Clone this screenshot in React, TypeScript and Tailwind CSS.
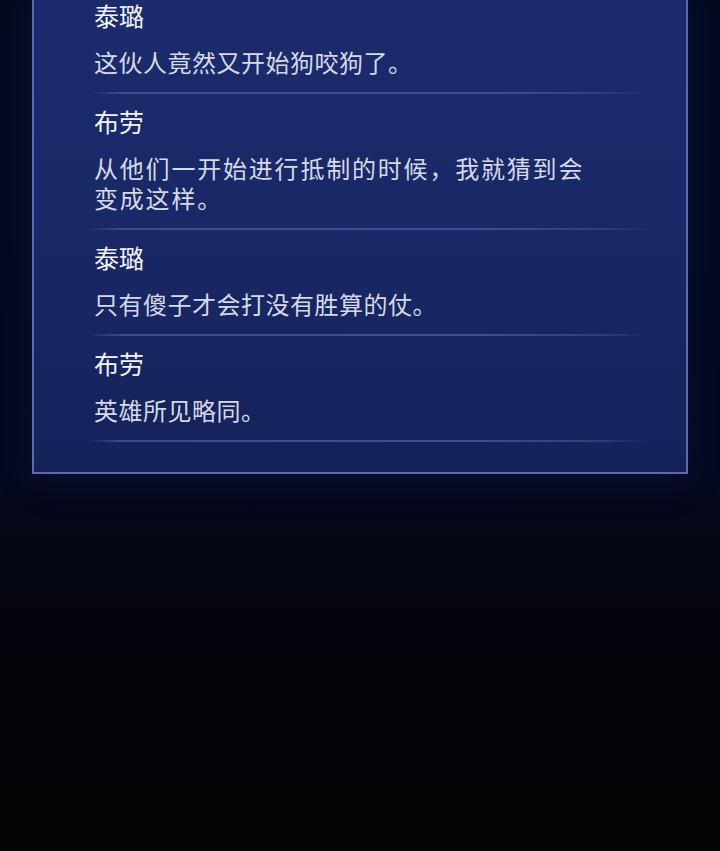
const lines = [
  { name: "泰璐", text: "这伙人竟然又开始狗咬狗了。", wide: false },
  { name: "布劳", text: "从他们一开始进行抵制的时候，我就猜到会变成这样。", wide: true },
  { name: "泰璐", text: "只有傻子才会打没有胜算的仗。", wide: false },
  { name: "布劳", text: "英雄所见略同。", wide: false },
];

const font = { fontFamily: '"Noto Sans CJK SC", "Noto Sans", sans-serif' };

export default function App() {
  return (
    <div
      className="h-[851px] w-[720px] overflow-hidden bg-[linear-gradient(180deg,#050a20_0%,#050920_55%,#03040c_72%,#050506_100%)]"
      style={font}
    >
      {/* dialogue log panel, scrolled so its top edge sits above the view */}
      <div className="mx-8 -mt-[14px] border-2 border-[#5f69b2] bg-[linear-gradient(180deg,#1b2b6d_0%,#192866_50%,#15225a_100%)] pb-[30px] shadow-[0_8px_30px_rgba(20,30,90,0.35)]">
        {lines.map((l, i) => (
          <div key={i}>
            <div className="pl-[60px] pt-[11px]">
              <div className="text-[25px] leading-[32px] text-[#f3f4f8]">{l.name}</div>
              <div
                className={
                  l.wide
                    ? "mt-[16px] max-w-[500px] text-[24px] leading-[30px] tracking-[1.8px] text-[#d5d9e8]"
                    : "mt-[16px] max-w-[480px] text-[24px] leading-[30px] tracking-[0.5px] text-[#d5d9e8]"
                }
              >
                {l.text}
              </div>
            </div>
            <div className="mt-[15px] ml-[54px] mr-[36px] h-[2px] bg-[linear-gradient(90deg,rgba(60,76,144,0)_0%,#3d4d92_6%,#3f4f95_70%,rgba(60,76,144,0.6)_92%,rgba(60,76,144,0)_100%)]" />
          </div>
        ))}
      </div>
    </div>
  );
}
